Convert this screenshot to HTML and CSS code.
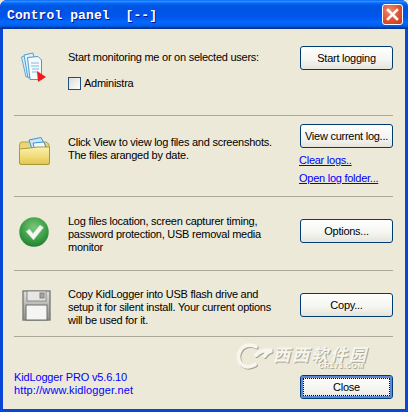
FILE: index.html
```html
<!DOCTYPE html>
<html lang="en">
<head>
<meta charset="utf-8">
<title>Control panel</title>
<link rel="stylesheet" href="styles.css">
</head>
<body>
<div class="window">
  <header class="titlebar">
    <span class="title">Control panel  [--]</span>
    <button class="close-x" aria-label="Close">
      <svg width="13" height="13" viewBox="0 0 13 13"><path d="M2 2 L11 11 M11 2 L2 11" stroke="#fff" stroke-width="2.6" stroke-linecap="square"/></svg>
    </button>
  </header>
  <main class="content">
    <section class="row row-a">
      <div class="icon">
        <svg width="25" height="30" viewBox="0 0 25 30">
          <path d="M.5 5 L9 2 L14 22 L5 25 Z" fill="#d8ecf8" stroke="#5aa9d6"/>
          <path d="M3 3 L12 1 L16 23 L7 26 Z" fill="#e4f2fb" stroke="#4f9fd0"/>
          <path d="M6.5 5.5 L17 4.5 L20.5 8 L20.5 27.5 L9 27.5 Z" fill="#f6fbff" stroke="#4a9acb"/>
          <path d="M10 11 H18 M10 14 H18 M11 17 H18 M11 20 H16" stroke="#7fb9de"/>
          <path d="M16 19 L25 25 L17 30 Z" fill="#f01a1a"/>
        </svg>
      </div>
      <div class="text">
        <p>Start monitoring me or on selected users:</p>
        <label class="check"><span class="box"></span><span class="check-label">Administra</span></label>
      </div>
      <div class="actions"><button class="btn">Start logging</button></div>
    </section>
    <section class="row row-b">
      <div class="icon">
        <svg width="31" height="28" viewBox="0 0 31 28">
          <defs><linearGradient id="fold" x1="0" y1="0" x2="0" y2="1"><stop offset="0" stop-color="#fbf1b0"/><stop offset=".55" stop-color="#f1dc78"/><stop offset="1" stop-color="#e2c550"/></linearGradient></defs>
          <path d="M.5 8 Q.5 5 3 5 L27 5 Q30.5 6 30.5 10 L30.5 20 L.5 20 Z" fill="#e9d576" stroke="#b5a33e"/>
          <path d="M10 3 L22 .5 L27 10 L13 12 Z" fill="#cfe6f7" stroke="#3f93d0"/>
          <path d="M14 6 L25 5 L28 13 L16 14 Z" fill="#eef7fd" stroke="#3f93d0"/>
          <path d="M.5 12 Q12 11 19 10 L30.5 10 L30.5 26 Q30.5 27.5 29 27.5 L2 27.5 Q.5 27.5 .5 26 Z" fill="url(#fold)" stroke="#a99a38"/>
        </svg>
      </div>
      <div class="text"><p>Click View to view log files and screenshots.<br>The files aranged by date.</p></div>
      <div class="actions">
        <button class="btn">View current log...</button>
        <a class="link link-first" href="#">Clear logs..</a>
        <a class="link" href="#">Open log folder...</a>
      </div>
    </section>
    <section class="row row-c">
      <div class="icon">
        <svg width="30" height="30" viewBox="0 0 30 30">
          <defs><radialGradient id="ok" cx=".5" cy=".35" r=".7"><stop offset="0" stop-color="#7cc87c"/><stop offset=".6" stop-color="#3c9f46"/><stop offset="1" stop-color="#1d7a2c"/></radialGradient></defs>
          <circle cx="15" cy="15" r="14.7" fill="url(#ok)"/>
          <path d="M7 14.5 L10.5 12 L14 16.5 L21 8 L24.5 10.5 L14.5 23 Z" fill="#f4f7f2" stroke="#b9d6b9" stroke-width=".6"/>
        </svg>
      </div>
      <div class="text"><p>Log files location, screen capturer timing,<br>password protection, USB removal media<br>monitor</p></div>
      <div class="actions"><button class="btn">Options...</button></div>
    </section>
    <section class="row row-d">
      <div class="icon">
        <svg width="29" height="31" viewBox="0 0 29 31">
          <defs><linearGradient id="disk" x1="0" y1="0" x2="0" y2="1"><stop offset="0" stop-color="#dfdfdb"/><stop offset="1" stop-color="#8f8f8b"/></linearGradient></defs>
          <rect x="1" y="1" width="27" height="29" fill="url(#disk)" stroke="#7d7d79" stroke-width="1.4"/>
          <rect x="5" y="1" width="19" height="10" fill="#e6e6e2" stroke="#8a8a86"/>
          <rect x="18" y="3" width="4" height="5" fill="#a5a5a1" stroke="#7d7d79"/>
          <rect x="4" y="15" width="21" height="15" fill="#f5f5f3" stroke="#6f6f6b"/>
        </svg>
      </div>
      <div class="text"><p>Copy KidLogger into USB flash drive and<br>setup it for silent install. Your current options<br>will be used for it.</p></div>
      <div class="actions"><button class="btn">Copy...</button></div>
    </section>
    <footer class="foot">
      <div class="about"><div class="about-name">KidLogger PRO v5.6.10</div><div class="about-url">http://www.kidlogger.net</div></div>
      <button class="btn btn-default"><span class="focus">Close</span></button>
      <div class="watermark">
        <svg class="wm-logo" width="38" height="30" viewBox="0 0 40 30"><path d="M21 4 Q11 0 5 7 Q0 15 5 22 Q11 28 20 23 M21 13 Q27 7 38 8 Q32 10 30 14" fill="none" stroke="#f7f6ee" stroke-width="4" stroke-linecap="round"/></svg>
        <div class="wm-text"><span class="wm-cn">西西软件园</span><span class="wm-en">CR173.COM</span></div>
      </div>
    </footer>
  </main>
</div>
</body>
</html>
```

FILE: styles.css
```css
* { box-sizing: border-box; }
html, body { margin: 0; padding: 0; }
body { width: 408px; height: 412px; overflow: hidden; background: #ece9d8; }
p { margin: 0; }

.window {
  width: 408px;
  height: 412px;
  display: flex;
  flex-direction: column;
  background: #0846d8;
  border-radius: 7px 7px 0 0;
  overflow: hidden;
  font: 11px/13px "Liberation Sans", Arial, sans-serif;
  letter-spacing: -.25px;
  color: #000;
}

.titlebar {
  height: 29px;
  flex: none;
  display: flex;
  align-items: center;
  justify-content: space-between;
  padding: 0 5px 0 7px;
  background: linear-gradient(180deg, #0058ee 0%, #3593ff 4%, #288eff 6%, #127dff 8%, #036ffc 10%, #0262ee 14%, #0057e5 20%, #0054e3 24%, #0055eb 56%, #005bf5 66%, #026afe 76%, #0062ef 86%, #0052d6 92%, #0040ab 94%, #003092 100%);
}
.title {
  margin-top: 2px;
  font: bold 13px/16px "Liberation Mono", monospace;
  letter-spacing: .1px;
  color: #fff;
  white-space: pre;
  text-shadow: 1px 1px 0 #0f1089;
}
.close-x {
  width: 21px;
  height: 21px;
  padding: 0;
  display: flex;
  align-items: center;
  justify-content: center;
  border: 1px solid #fff;
  border-radius: 3px;
  background: radial-gradient(circle at 35% 30%, #ef8a6b 0%, #de5130 55%, #c13a17 100%);
}

.content {
  position: relative;
  flex: 1;
  margin: 0 3px 3px;
  padding: 0 12px 0 11px;
  background: #ece9d8;
}

.row {
  display: grid;
  grid-template-columns: 54px 232px 93px;
  border-bottom: 1px solid #aca899;
}
.row-a { height: 87px; padding-top: 17px; }
.row-b { height: 81px; padding-top: 8px; }
.row-c { height: 74px; padding-top: 18px; }
.row-d { height: 66px; padding-top: 17px; }

.row-a .text { padding-top: 5px; }
.row-b .text { padding-top: 12px; }

.icon svg { display: block; }
.row-a .icon { padding: 6px 0 0 7px; }
.row-b .icon { padding: 13px 0 0 5px; }
.row-c .icon { padding: 2px 0 0 5px; }
.row-d .icon { padding: 2px 0 0 8px; }

.row-c .actions { padding-top: 4px; }
.row-d .actions { padding-top: 5px; }

.check {
  display: flex;
  align-items: center;
  gap: 3px;
  margin-top: 13px;
  white-space: nowrap;
}
.box {
  width: 13px;
  height: 13px;
  flex: none;
  border: 1px solid #1c5180;
  background: linear-gradient(135deg, #dcdcd7, #ffffff);
}

.actions { display: flex; flex-direction: column; }

.btn {
  width: 93px;
  height: 24px;
  padding: 0;
  font: inherit;
  letter-spacing: inherit;
  color: #000;
  border: 1px solid #003c74;
  border-radius: 3px;
  background: linear-gradient(180deg, #ffffff 0%, #f4f4f0 60%, #e6e4da 100%);
}

.link {
  color: #0000ff;
  text-decoration: underline;
  white-space: nowrap;
  margin-left: -1px;
  margin-top: 5px;
}
.link-first { margin-top: 6px; }

.foot {
  display: flex;
  justify-content: space-between;
  align-items: flex-start;
  padding: 33px 0 0 0;
}
.about { color: #0000ff; margin-top: 1px; }
.about-name { letter-spacing: -.15px; }
.about-url { letter-spacing: .12px; }
.btn-default {
  margin-top: 5px;
  padding: 2px;
  box-shadow: inset 0 0 0 2px #5b89d8;
  display: block;
}
.focus {
  display: block;
  height: 100%;
  line-height: 16px;
  border: 1px dotted #000;
}

.watermark {
  position: absolute;
  left: 233px;
  top: 313px;
  display: flex;
  align-items: center;
  color: #f7f6ee;
  text-shadow: 1px 1px 0 #a8a594;
}
.wm-logo { filter: drop-shadow(1px 1px 0 #a8a594); }
.wm-text { display: flex; flex-direction: column; align-items: flex-end; margin-left: -1px; }
.wm-cn { font: italic bold 17px/16px "Noto Sans CJK SC", sans-serif; letter-spacing: 2px; }
.wm-en { font: bold 7px/7px "Liberation Sans", sans-serif; letter-spacing: .6px; margin-right: 4px; }
```
